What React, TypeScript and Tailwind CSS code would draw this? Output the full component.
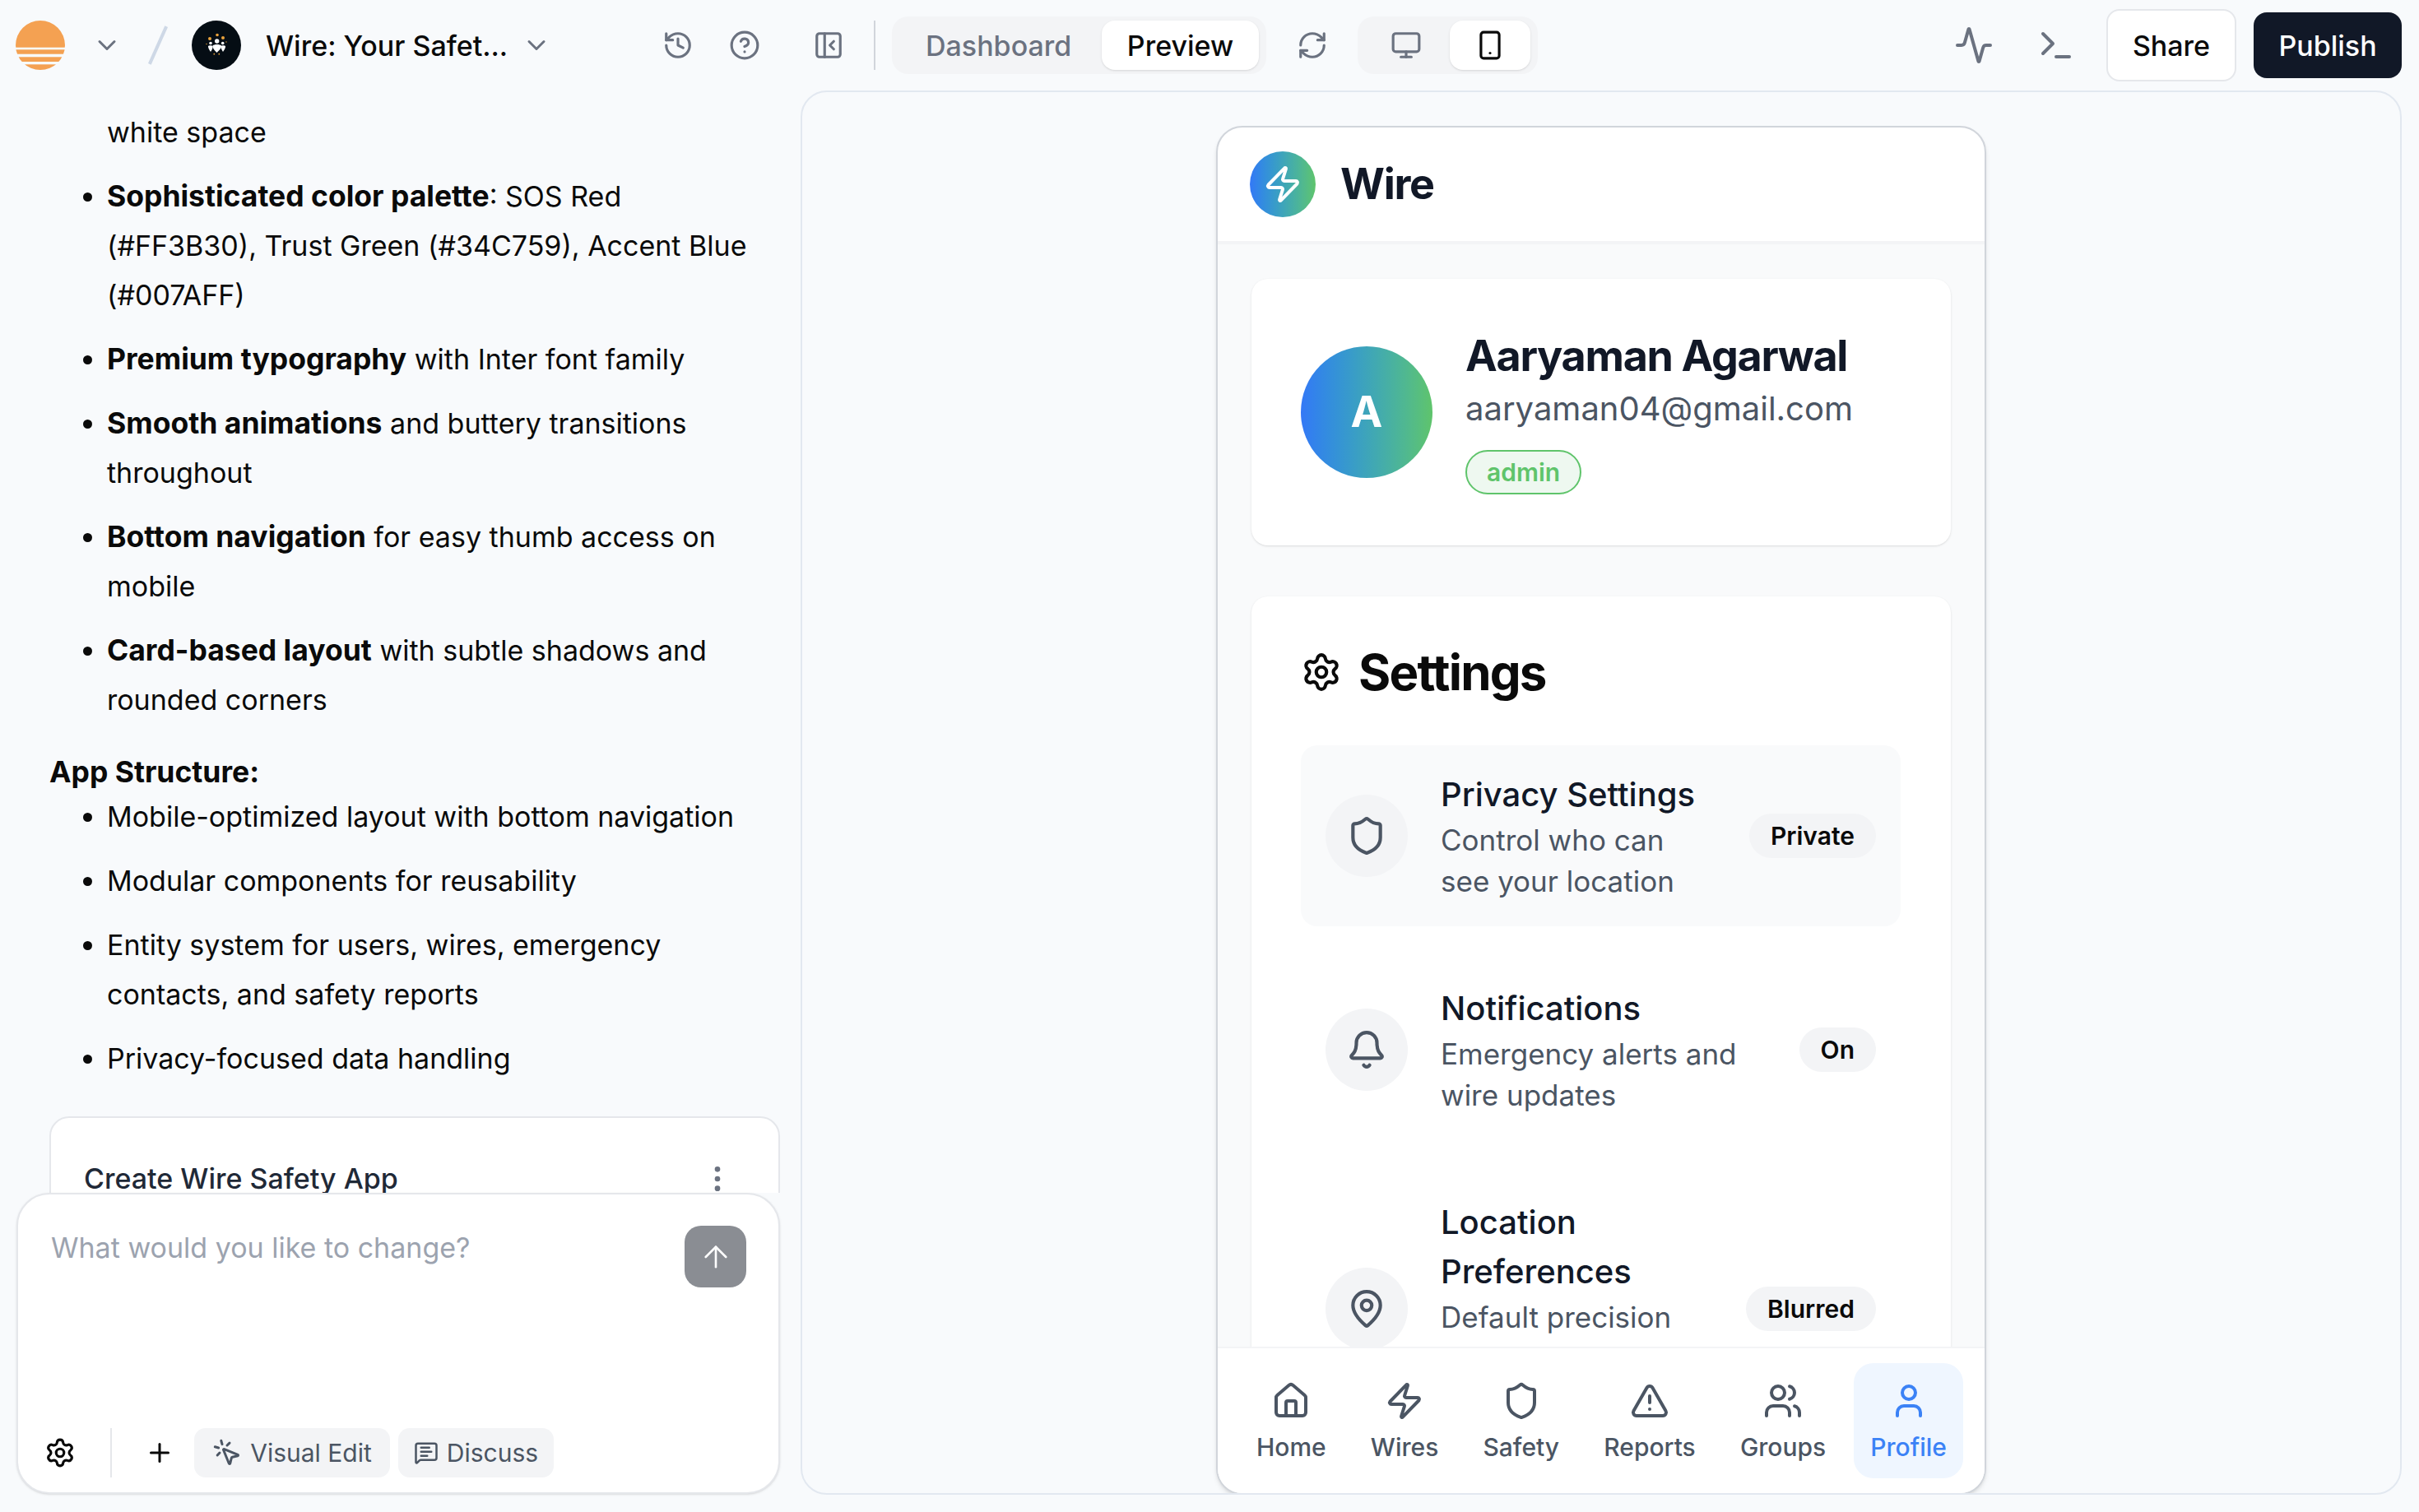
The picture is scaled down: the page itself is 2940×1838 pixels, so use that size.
import React from 'react';
import {
  Activity, ArrowUp, Bell, ChevronDown, CircleHelp, EllipsisVertical, History, House, MapPin,
  MessageSquareText, Monitor, MousePointerClick, PanelLeftClose, Plus, RefreshCw, Settings, Shield,
  Smartphone, Terminal, TriangleAlert, User, Users, Zap,
} from 'lucide-react';

function SunLogo() {
  return (
    <svg width="60" height="60" viewBox="0 0 60 60" className="shrink-0">
      <defs>
        <clipPath id="sun">
          <circle cx="30" cy="30" r="30" />
        </clipPath>
      </defs>
      <g clipPath="url(#sun)" fill="#f4a152">
        <rect width="60" height="32.7" />
        <rect y="35.3" width="60" height="5.4" />
        <rect y="44.3" width="60" height="5.7" />
        <rect y="53.3" width="60" height="6.7" />
      </g>
    </svg>
  );
}

function ProjectLogo() {
  return (
    <svg width="60" height="60" viewBox="0 0 60 60" className="shrink-0">
      <circle cx="30" cy="30" r="30" fill="#050d14" />
      <g fill="#e9a23b">
        <circle cx="22" cy="22" r="2" />
        <circle cx="31" cy="17.5" r="1.8" />
        <circle cx="38" cy="21" r="2" />
        <circle cx="18" cy="28.5" r="0.7" />
        <circle cx="42" cy="26" r="0.7" />
        <circle cx="27.3" cy="40.7" r="0.9" />
        <circle cx="33.3" cy="40.7" r="0.9" />
      </g>
      <g fill="#fff">
        <circle cx="30.7" cy="25" r="2.7" />
        <path d="M25.5 30.5c2-2 8.500-2 10.500 0 .6 3-3 6-5.500 8.500-2.500-2.500-5.500-5.500-5-8.500z" />
        <circle cx="23" cy="27.5" r="1.8" />
        <path d="M20 31c1-1 4.500-1 5.500 0 .4 2-1 5-2.500 7-1.500-2-3.300-5-3-7z" />
        <circle cx="37.7" cy="27.5" r="1.8" />
        <path d="M35.500 31c1-1 4.500-1 5.500 0 .3 2-1.500 5-3 7-1.500-2-2.900-5-2.500-7z" />
      </g>
    </svg>
  );
}

const features = [
  { lead: 'Premium typography', rest: ' with Inter font family' },
  { lead: 'Smooth animations', rest: ' and buttery transitions throughout' },
  { lead: 'Bottom navigation', rest: ' for easy thumb access on mobile' },
  { lead: 'Card-based layout', rest: ' with subtle shadows and rounded corners' },
];

const structure = [
  'Mobile-optimized layout with bottom navigation',
  'Modular components for reusability',
  'Entity system for users, wires, emergency contacts, and safety reports',
  'Privacy-focused data handling',
];

function ChatPanel() {
  return (
    <aside className="w-[973px] shrink-0 h-full flex flex-col pl-[20px] pr-[25px] pb-[22px]">
      <div className="h-[1340px] shrink-0 overflow-hidden pl-[40px] pt-[21px] text-[34px] leading-[60px] text-[#0a0a0a]">
        <p className="pl-[70px]">white space</p>
        <ul className="list-disc pl-[70px] pr-[32px] mt-[18px] flex flex-col gap-[18px]">
          <li>
            <strong className="font-bold text-[35.5px] leading-none">Sophisticated color palette</strong>: SOS Red (#FF3B30), Trust Green (#34C759), Accent Blue (#007AFF)
          </li>
          {features.map((f) => (
            <li key={f.lead}>
              <strong className="font-bold text-[35.5px] leading-none">{f.lead}</strong>
              {f.rest}
            </li>
          ))}
        </ul>
        <p className="font-bold text-[35.5px] mt-[28px]">App Structure:</p>
        <ul className="list-disc pl-[70px] pr-[32px] mt-[-6px] flex flex-col gap-[18px]">
          {structure.map((s) => (
            <li key={s}>{s}</li>
          ))}
        </ul>
        <div className="mt-[40px] h-[200px] bg-white border-2 border-[#e5e7eb] rounded-[24px] pl-[40px] pr-[54px] pt-[44px] flex justify-between text-[#1f2937] font-medium">
          <span className="leading-[60px]">Create Wire Safety App</span>
          <EllipsisVertical size={40} className="text-[#6b7280] mt-[10px]" />
        </div>
      </div>
      <div className="flex-1 bg-white border-2 border-[#e5e7eb] rounded-[40px] shadow-sm pl-[40px] pr-[39px] pb-[18px] pt-[38px] flex flex-col justify-between">
        <div className="flex justify-between items-start">
          <span className="text-[34px] leading-[54px] text-[#9ca3af]">What would you like to change?</span>
          <button className="w-[75px] h-[75px] rounded-[20px] bg-[#8a8d93] flex items-center justify-center text-white">
            <ArrowUp size={42} strokeWidth={1.5} />
          </button>
        </div>
        <div className="flex items-center h-[60px] -ml-[8px]">
          <Settings size={38} strokeWidth={2} className="text-[#0a0a0a]" />
          <div className="w-[2px] h-[60px] bg-[#e5e7eb] ml-[42px]" />
          <Plus size={36} strokeWidth={2} className="text-[#0a0a0a] ml-[40px]" />
          <button className="ml-[24px] h-[60px] w-[238px] rounded-[14px] bg-[#f3f4f6] flex items-center justify-center gap-[10px] text-[30px] text-[#4b5563]">
            <MousePointerClick size={36} strokeWidth={2} />
            Visual Edit
          </button>
          <button className="ml-[10px] h-[60px] w-[189px] rounded-[14px] bg-[#f3f4f6] flex items-center justify-center gap-[10px] text-[30px] text-[#4b5563]">
            <MessageSquareText size={30} strokeWidth={2} />
            Discuss
          </button>
        </div>
      </div>
    </aside>
  );
}

function TopBar() {
  return (
    <header className="h-[110px] shrink-0 flex items-center pl-[19px] pr-[21px] text-[#0a0a0a]">
      <SunLogo />
      <ChevronDown size={36} className="text-[#6b7280] ml-[33px]" />
      <div className="w-[4px] h-[50px] bg-[#ced8e6] rotate-[24deg] ml-[42px]" />
      <div className="ml-[39px]">
        <ProjectLogo />
      </div>
      <span className="ml-[30px] text-[34px] font-medium w-[311px] whitespace-nowrap">Wire: Your Safet...</span>
      <ChevronDown size={36} className="text-[#6b7280]" />
      <History size={38} className="text-[#6b7280] ml-[135px]" />
      <CircleHelp size={38} className="text-[#6b7280] ml-[43px]" />
      <PanelLeftClose size={38} className="text-[#6b7280] ml-[64px]" />
      <div className="w-[2px] h-[60px] bg-[#d1d5db] ml-[36px]" />
      <div className="ml-[20px] h-[70px] w-[455px] rounded-[20px] bg-[#f3f4f6] flex items-center justify-between px-[9px] text-[34px] font-medium">
        <span className="pl-[32px] text-[#6b7280]">Dashboard</span>
        <span className="w-[191px] h-[60px] rounded-[16px] bg-white shadow-sm flex items-center justify-center">Preview</span>
      </div>
      <RefreshCw size={38} className="text-[#6b7280] ml-[37px]" />
      <div className="ml-[36px] h-[70px] w-[219px] rounded-[20px] bg-[#f3f4f6] flex items-center justify-between pl-[40px] pr-[9px]">
        <Monitor size={38} className="text-[#6b7280]" />
        <span className="w-[98px] h-[60px] rounded-[16px] bg-white shadow-sm flex items-center justify-center">
          <Smartphone size={38} />
        </span>
      </div>
      <Activity size={48} strokeWidth={2} className="text-[#6b7280] ml-[506px]" />
      <Terminal size={48} strokeWidth={2} className="text-[#6b7280] ml-[52px]" />
      <button className="ml-[37px] w-[158px] h-[88px] bg-white border-2 border-[#e5e7eb] rounded-[16px] text-[34px] font-medium">Share</button>
      <button className="ml-[21px] w-[180px] h-[80px] bg-[#111827] text-white rounded-[16px] text-[34px] font-medium">Publish</button>
    </header>
  );
}

const rows = [
  { Icon: Shield, title: 'Privacy Settings', sub: 'Control who can see your location', badge: 'Private', rowClass: 'bg-[#f9fafb]', subClass: '' },
  { Icon: Bell, title: 'Notifications', sub: 'Emergency alerts and wire updates', badge: 'On', rowClass: '', subClass: '' },
  // rest of this subtitle sits under the nav bar
  { Icon: MapPin, title: 'Location Preferences', sub: 'Default precision', badge: 'Blurred', rowClass: '', subClass: 'min-h-[150px]' },
];

const nav = [
  { Icon: House, label: 'Home' },
  { Icon: Zap, label: 'Wires' },
  { Icon: Shield, label: 'Safety' },
  { Icon: TriangleAlert, label: 'Reports' },
  { Icon: Users, label: 'Groups' },
  { Icon: User, label: 'Profile', active: true },
];

function Phone() {
  return (
    <div className="w-[936px] h-[1664px] mt-[41px] bg-white border-2 border-[#d1d5db] rounded-[32px] shadow-md overflow-hidden flex flex-col">
      <div className="h-[142px] shrink-0 flex items-center gap-[30px] pl-[39px] border-b-4 border-[#f3f4f6]">
        <div className="w-[80px] h-[80px] rounded-full bg-gradient-to-r from-[#3478f6] to-[#5fc46b] flex items-center justify-center text-white">
          <Zap size={48} strokeWidth={2} />
        </div>
        <span className="text-[52px] font-bold tracking-tight text-[#111827]">Wire</span>
      </div>
      <div className="flex-1 min-h-0 overflow-hidden bg-[#f9fafb] px-[41px] pt-[42px]">
        <div className="h-[324px] bg-white rounded-[20px] shadow-sm flex items-center pl-[60px] gap-[40px]">
          <div className="w-[160px] h-[160px] rounded-full bg-gradient-to-r from-[#3478f6] to-[#5fc46b] flex items-center justify-center text-white text-[52px] font-bold">A</div>
          <div className="flex flex-col items-start">
            <span className="text-[52px] leading-[64px] font-bold tracking-tight text-[#111827]">Aaryaman Agarwal</span>
            <span className="text-[40px] leading-[60px] mt-[2px] text-[#4b5563]">aaryaman04@gmail.com</span>
            <span className="mt-[20px] h-[54px] px-[24px] rounded-full border-2 border-[#5fc46b] bg-[#eef8f0] text-[#5fc46b] text-[30px] font-semibold flex items-center">admin</span>
          </div>
        </div>
        <div className="mt-[62px] bg-white rounded-[20px] shadow-sm pl-[60px] pr-[61px] pt-[52px]">
          <div className="flex items-center gap-[20px]">
            <Settings size={50} strokeWidth={2} className="text-[#0a0a0a]" />
            <span className="text-[60px] leading-[80px] font-bold tracking-[-0.03em] text-[#0a0a0a]">Settings</span>
          </div>
          <div className="mt-[49px] flex flex-col gap-[40px]">
            {rows.map(({ Icon, title, sub, badge, rowClass, subClass }) => (
              <div key={title} className={`flex items-center rounded-[20px] pl-[30px] pr-[30px] py-[30px] ${rowClass}`}>
                <div className="w-[100px] h-[100px] shrink-0 rounded-full bg-[#f3f4f6] flex items-center justify-center text-[#4b5563]">
                  <Icon size={50} strokeWidth={2} />
                </div>
                <div className="flex-1 pl-[40px] pr-[40px]">
                  <div className="text-[40px] leading-[60px] font-medium text-[#111827]">{title}</div>
                  <div className={`text-[35px] leading-[50px] text-[#4b5563] ${subClass}`}>{sub}</div>
                </div>
                <span className="h-[54px] px-[26px] rounded-full bg-[#f3f4f6] text-[30px] font-semibold text-[#0a0a0a] flex items-center">{badge}</span>
              </div>
            ))}
          </div>
        </div>
      </div>
      <nav className="h-[178px] shrink-0 bg-white border-t-2 border-[#f3f4f6] flex items-center justify-between pl-[27px] pr-[26px]">
        {nav.map(({ Icon, label, active }) => (
          <div key={label} className={`h-[140px] rounded-[24px] px-[20px] pt-[6px] flex flex-col items-center justify-center gap-[10px] text-[30px] font-medium ${active ? 'bg-[#eff6ff] text-[#3b82f6]' : 'text-[#4b5563]'}`}>
            <Icon size={48} strokeWidth={2} />
            {label}
          </div>
        ))}
      </nav>
    </div>
  );
}

export default function App() {
  return (
    <div className="w-[2940px] h-[1838px] bg-[#f8fafc] flex flex-col overflow-hidden font-['Inter',sans-serif]">
      <TopBar />
      <div className="flex-1 min-h-0 flex">
        <ChatPanel />
        <main className="w-[1946px] h-[1707px] bg-[#f8fafc] border-2 border-[#e2e8f0] rounded-[32px] flex justify-center overflow-hidden">
          <Phone />
        </main>
      </div>
    </div>
  );
}
